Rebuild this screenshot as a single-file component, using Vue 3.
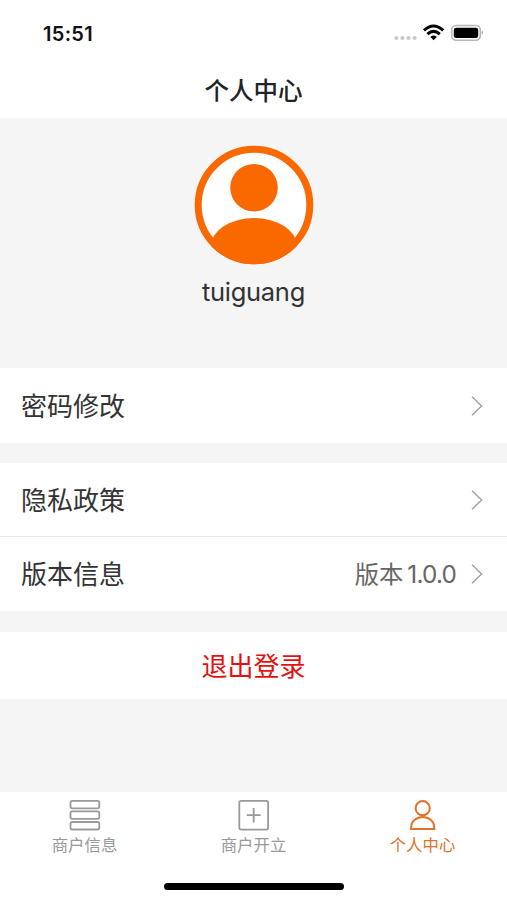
<script setup>
const groups = [
  [{ label: '密码修改' }],
  [{ label: '隐私政策' }, { label: '版本信息', text: '版本', version: '1.0.0' }],
]
const tabs = [
  { label: '商户信息', icon: 'list' },
  { label: '商户开立', icon: 'add' },
  { label: '个人中心', icon: 'user', active: true },
]
</script>

<template>
  <div class="page">
    <header class="header">
      <div class="status">
        <span class="time">15:51</span>
        <svg class="indicators" width="92" height="20" viewBox="0 0 92 20">
          <g fill="#c9c9c9">
            <circle cx="4.3" cy="15" r="2" />
            <circle cx="10.4" cy="15" r="2" />
            <circle cx="16.5" cy="15" r="2" />
            <circle cx="22.6" cy="15" r="2" />
          </g>
          <g fill="none" stroke="#000" stroke-width="3">
            <path d="M32 7.3Q41.6-1.4 51.2 7.3" />
            <path d="M35.4 11.2Q41.6 5.5 47.8 11.2" />
          </g>
          <path d="M38.4 14Q41.6 11.2 44.8 14L41.6 17.2Z" />
          <rect x="59.7" y="2.5" width="28.6" height="14.7" rx="4.4" fill="#fff" stroke="#b5b5b5" stroke-width="1.6" />
          <rect x="61.8" y="4.7" width="24.4" height="10.4" rx="2.4" />
          <path d="M89.8 7.6Q92.2 9.8 89.8 12Z" fill="#999" />
        </svg>
      </div>
      <h1 class="title">个人中心</h1>
    </header>

    <section class="profile">
      <svg class="avatar" width="120" height="120" viewBox="0 0 120 120">
        <defs>
          <clipPath id="avatar-clip"><circle cx="60" cy="60" r="59.3" /></clipPath>
        </defs>
        <circle cx="60" cy="60" r="55.8" fill="#fff" stroke="#fa6800" stroke-width="7" />
        <circle cx="60" cy="42.7" r="23.8" fill="#fa6800" />
        <ellipse cx="60" cy="101" rx="43" ry="28" fill="#fa6800" clip-path="url(#avatar-clip)" />
      </svg>
      <div class="name">tuiguang</div>
    </section>

    <section v-for="(group, i) in groups" :key="i" class="group">
      <div v-for="row in group" :key="row.label" class="row">
        <span class="label">{{ row.label }}</span>
        <span v-if="row.text" class="value">{{ row.text }}<span class="version">{{ row.version }}</span></span>
        <svg class="chevron" width="12" height="20" viewBox="0 0 12 20">
          <path d="M1 .8L10.6 10L1 19.2" fill="none" stroke="#a3a3a3" stroke-width="1.5" />
        </svg>
      </div>
    </section>

    <button class="logout">退出登录</button>

    <nav class="tabbar">
      <div v-for="tab in tabs" :key="tab.label" class="tab" :class="{ active: tab.active }">
        <svg width="32" height="32" viewBox="0 0 32 32" fill="none" stroke="currentColor" stroke-width="1.8">
          <template v-if="tab.icon === 'list'">
            <rect x="1.5" y="1.8" width="28.8" height="7.5" rx="1.8" />
            <rect x="1.5" y="12.3" width="28.8" height="7.5" rx="1.8" />
            <rect x="1.5" y="23" width="28.8" height="7.5" rx="1.8" />
          </template>
          <template v-else-if="tab.icon === 'add'">
            <rect x="1.3" y="1.8" width="28.8" height="28.8" rx="1.8" />
            <path d="M8.7 16.2H22.7M15.7 9V23.4" />
          </template>
          <template v-else>
            <circle cx="15.7" cy="9.2" r="7.1" stroke-width="2" />
            <path d="M4.1 30V29C4.1 14.4 27.3 14.4 27.3 29V30Z" stroke-width="2" />
          </template>
        </svg>
        <span>{{ tab.label }}</span>
      </div>
      <div class="home-indicator"></div>
    </nav>
  </div>
</template>

<style>
body {
  margin: 0;
}
</style>

<style scoped>
.page {
  display: flex;
  flex-direction: column;
  height: 900px;
  background: #f5f5f5;
  color: #333;
  font-family: Inter, "Noto Sans CJK SC", sans-serif;
}
.header {
  height: 118px;
  background: #fff;
}
.status {
  display: flex;
  justify-content: space-between;
  align-items: center;
  height: 66px;
  padding: 0 23px 0 43px;
}
.time {
  padding-top: 1px;
  color: #111;
  font-size: 20px;
  font-weight: 600;
  letter-spacing: 0.3px;
}
.title {
  margin: 0;
  color: #222326;
  font-size: 24.5px;
  font-weight: 500;
  line-height: 50px;
  text-align: center;
}
.profile {
  display: flex;
  flex-direction: column;
  align-items: center;
  height: 223px;
  padding-top: 27px;
}
.name {
  margin-top: 9px;
  font-size: 25.5px;
  letter-spacing: -0.3px;
  line-height: 36px;
}
.group {
  margin-bottom: 20px;
  background: #fff;
}
.group + .group {
  margin-bottom: 21px;
}
.row {
  display: flex;
  align-items: center;
  box-sizing: border-box;
  height: 75px;
  padding: 0 24px 0 21px;
}
.row + .row {
  height: 75px;
  border-top: 1px solid #e8e8e8;
}
.group + .group .row:first-child {
  height: 73px;
  padding-top: 1px;
}
.label {
  flex: 1;
  padding-bottom: 3px;
  font-size: 26px;
}
.value {
  margin-right: 15px;
  padding-bottom: 3px;
  color: #666;
  font-size: 24.3px;
}
.version {
  margin-left: 4px;
  letter-spacing: -0.8px;
}
.logout {
  height: 67px;
  border: 0;
  padding: 0 0 2px;
  background: #fff;
  color: #e60f0f;
  font: inherit;
  font-size: 26px;
}
.tabbar {
  position: relative;
  display: flex;
  height: 108px;
  margin-top: auto;
  background: #fff;
}
.tab {
  display: flex;
  flex: 1;
  flex-direction: column;
  align-items: center;
  padding-top: 7px;
  color: #999;
  font-size: 16.4px;
  line-height: 29px;
}
.tab.active {
  color: #e2712a;
}
.home-indicator {
  position: absolute;
  bottom: 10px;
  left: 164px;
  width: 180px;
  height: 7px;
  border-radius: 4px;
  background: #000;
}
</style>
